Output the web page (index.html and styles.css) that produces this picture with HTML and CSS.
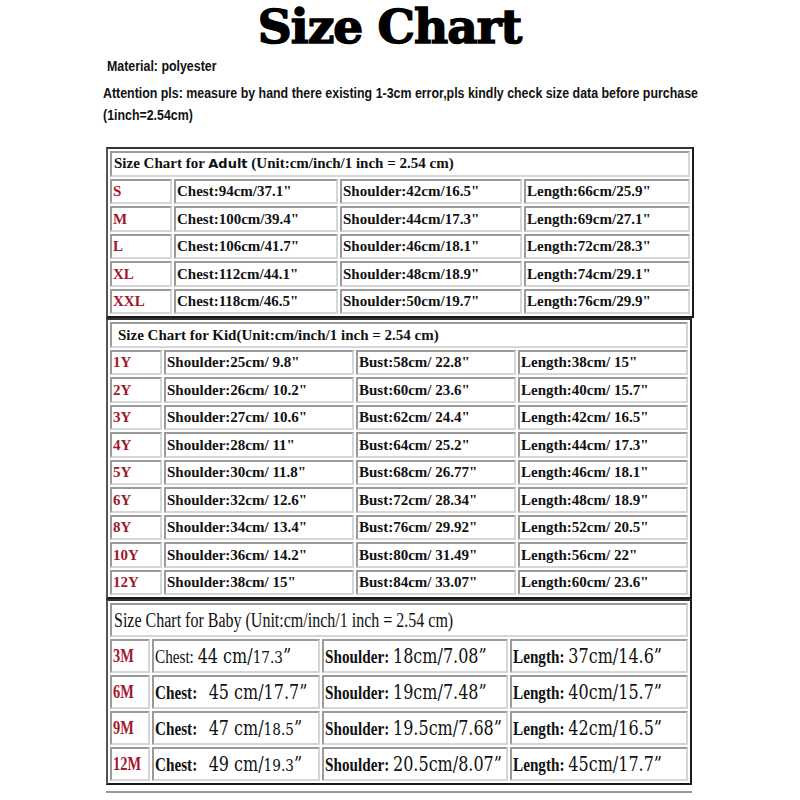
FILE: index.html
```html
<!DOCTYPE html>
<html>
<head>
<meta charset="utf-8">
<link rel="stylesheet" href="styles.css">
</head>
<body>
<div class="page">
  <h1 class="title">Size Chart</h1>
  <div class="notes">
    <p class="note note-material"><span class="narrow">Material: polyester</span></p>
    <p class="note"><span class="narrow">Attention pls: measure by hand there existing 1-3cm error,pls kindly check size data before purchase</span></p>
    <p class="note"><span class="narrow">(1inch=2.54cm)</span></p>
  </div>
  <div class="charts">
    <table class="chart adult">
      <colgroup><col class="a1"><col class="a2"><col class="a3"><col class="a4"></colgroup>
      <tr><td colspan="4" class="head">Size Chart for <span class="adult-word">Adult</span> (Unit:cm/inch/1 inch = 2.54 cm)</td></tr>
      <tr><td class="sz">S</td><td>Chest:94cm/37.1"</td><td>Shoulder:42cm/16.5"</td><td>Length:66cm/25.9"</td></tr>
      <tr><td class="sz">M</td><td>Chest:100cm/39.4"</td><td>Shoulder:44cm/17.3"</td><td>Length:69cm/27.1"</td></tr>
      <tr><td class="sz">L</td><td>Chest:106cm/41.7"</td><td>Shoulder:46cm/18.1"</td><td>Length:72cm/28.3"</td></tr>
      <tr><td class="sz">XL</td><td>Chest:112cm/44.1"</td><td>Shoulder:48cm/18.9"</td><td>Length:74cm/29.1"</td></tr>
      <tr><td class="sz">XXL</td><td>Chest:118cm/46.5"</td><td>Shoulder:50cm/19.7"</td><td>Length:76cm/29.9"</td></tr>
    </table>
    <table class="chart kid">
      <colgroup><col class="k1"><col class="k2"><col class="k3"><col class="k4"></colgroup>
      <tr><td colspan="4" class="head head-kid">Size Chart for Kid(Unit:cm/inch/1 inch = 2.54 cm)</td></tr>
      <tr><td class="sz">1Y</td><td>Shoulder:25cm/ 9.8"</td><td>Bust:58cm/ 22.8"</td><td>Length:38cm/ 15"</td></tr>
      <tr><td class="sz">2Y</td><td>Shoulder:26cm/ 10.2"</td><td>Bust:60cm/ 23.6"</td><td>Length:40cm/ 15.7"</td></tr>
      <tr><td class="sz">3Y</td><td>Shoulder:27cm/ 10.6"</td><td>Bust:62cm/ 24.4"</td><td>Length:42cm/ 16.5"</td></tr>
      <tr><td class="sz">4Y</td><td>Shoulder:28cm/ 11"</td><td>Bust:64cm/ 25.2"</td><td>Length:44cm/ 17.3"</td></tr>
      <tr><td class="sz">5Y</td><td>Shoulder:30cm/ 11.8"</td><td>Bust:68cm/ 26.77"</td><td>Length:46cm/ 18.1"</td></tr>
      <tr><td class="sz">6Y</td><td>Shoulder:32cm/ 12.6"</td><td>Bust:72cm/ 28.34"</td><td>Length:48cm/ 18.9"</td></tr>
      <tr><td class="sz">8Y</td><td>Shoulder:34cm/ 13.4"</td><td>Bust:76cm/ 29.92"</td><td>Length:52cm/ 20.5"</td></tr>
      <tr><td class="sz">10Y</td><td>Shoulder:36cm/ 14.2"</td><td>Bust:80cm/ 31.49"</td><td>Length:56cm/ 22"</td></tr>
      <tr><td class="sz">12Y</td><td>Shoulder:38cm/ 15"</td><td>Bust:84cm/ 33.07"</td><td>Length:60cm/ 23.6"</td></tr>
    </table>
    <table class="chart baby">
      <colgroup><col class="b1"><col class="b2"><col class="b3"><col class="b4"></colgroup>
      <tr><td colspan="4" class="head head-baby"><span class="squeeze">Size Chart for Baby (Unit:cm/inch/1 inch = 2.54 cm)</span></td></tr>
      <tr><td class="sz"><span class="squeeze">3M</span></td><td><span class="squeeze">Chest: <span class="num">44 cm/<small>17.3</small>”</span></span></td><td><span class="squeeze"><b>Shoulder:</b> <span class="num">18cm/7.08”</span></span></td><td><span class="squeeze"><b>Length:</b> <span class="num">37cm/14.6”</span></span></td></tr>
      <tr><td class="sz"><span class="squeeze">6M</span></td><td><span class="squeeze"><b>Chest:</b> &nbsp; <span class="num">45 cm/17.7”</span></span></td><td><span class="squeeze"><b>Shoulder:</b> <span class="num">19cm/7.48”</span></span></td><td><span class="squeeze"><b>Length:</b> <span class="num">40cm/15.7”</span></span></td></tr>
      <tr><td class="sz"><span class="squeeze">9M</span></td><td><span class="squeeze"><b>Chest:</b> &nbsp; <span class="num">47 cm/<small>18.5</small>”</span></span></td><td><span class="squeeze"><b>Shoulder:</b> <span class="num">19.5cm/7.68”</span></span></td><td><span class="squeeze"><b>Length:</b> <span class="num">42cm/16.5”</span></span></td></tr>
      <tr><td class="sz"><span class="squeeze">12M</span></td><td><span class="squeeze"><b>Chest:</b> &nbsp; <span class="num">49 cm/<small>19.3</small>”</span></span></td><td><span class="squeeze"><b>Shoulder:</b> <span class="num">20.5cm/8.07”</span></span></td><td><span class="squeeze"><b>Length:</b> <span class="num">45cm/17.7”</span></span></td></tr>
    </table>
    <div class="rule"></div>
  </div>
</div>
</body>
</html>
```

FILE: styles.css
```css
html, body {
  margin: 0;
  padding: 0;
  background: #fff;
}
body {
  font-family: "Liberation Serif", "Times New Roman", serif;
  color: #111;
}
.page {
  width: 800px;
}
.title {
  margin: 0;
  padding-right: 21px;
  height: 52px;
  line-height: 54px;
  text-align: center;
  font-family: "DejaVu Serif", serif;
  font-weight: 900;
  font-size: 47px;
  letter-spacing: -1px;
  -webkit-text-stroke: 1.5px #000;
  color: #000;
}
.notes {
  padding-left: 103px;
  padding-top: 3px;
}
.note {
  margin: 0;
  height: 22px;
  line-height: 22px;
  font-family: "Liberation Sans", "Arial", sans-serif;
  font-weight: bold;
  font-size: 14px;
  color: #111;
  white-space: nowrap;
}
.narrow {
  display: inline-block;
  transform: scaleX(0.885);
  transform-origin: left center;
}
.note + .note {
  margin-top: 5px;
}
.note + .note + .note {
  margin-top: 0;
}
.note-material {
  padding-left: 4px;
}
.charts {
  padding-left: 106px;
  padding-top: 21px;
}
.chart {
  width: 586px;
  table-layout: fixed;
  border-collapse: separate;
  border-spacing: 2px;
  border: 2px solid;
  border-color: #333 #1a1a1a #1a1a1a #555;
  background: #fff;
}
.chart td {
  box-sizing: border-box;
  height: 25.5px;
  padding: 0 0 0 1px;
  border: 2px solid;
  border-color: #9a9a9a #d6d6d6 #d6d6d6 #9a9a9a;
  font-weight: bold;
  font-size: 15px;
  line-height: 18px;
  white-space: nowrap;
  overflow: hidden;
  vertical-align: middle;
}
.chart td.sz {
  color: #a3172c;
}
.chart td.head {
  padding-left: 2px;
}
.head-kid {
  padding-left: 6px !important;
}
.adult-word {
  font-family: "DejaVu Sans", sans-serif;
  font-size: 13px;
}
.a1 { width: 62px; }
.a2 { width: 164px; }
.a3 { width: 182px; }
.a4 { width: 166px; }
.k1 { width: 52px; }
.k2 { width: 190px; }
.k3 { width: 160px; }
.k4 { width: 170px; }
.b1 { width: 40px; }
.b2 { width: 168px; }
.b3 { width: 186px; }
.b4 { width: 178px; }
.baby td {
  height: 34px;
  font-weight: normal;
  font-size: 19px;
}
.baby td.sz {
  font-weight: bold;
  font-size: 18px;
}
.baby td b {
  font-weight: bold;
}
.squeeze {
  display: inline-block;
  transform: scaleX(0.8);
  transform-origin: left center;
}
.head-baby .squeeze {
  font-size: 20px;
}
.num {
  font-family: "DejaVu Serif", serif;
  font-size: 20px;
}
.num small {
  font-size: 17px;
}
.rule {
  width: 586px;
  height: 2px;
  margin-top: 6px;
  background: #999;
}
```
